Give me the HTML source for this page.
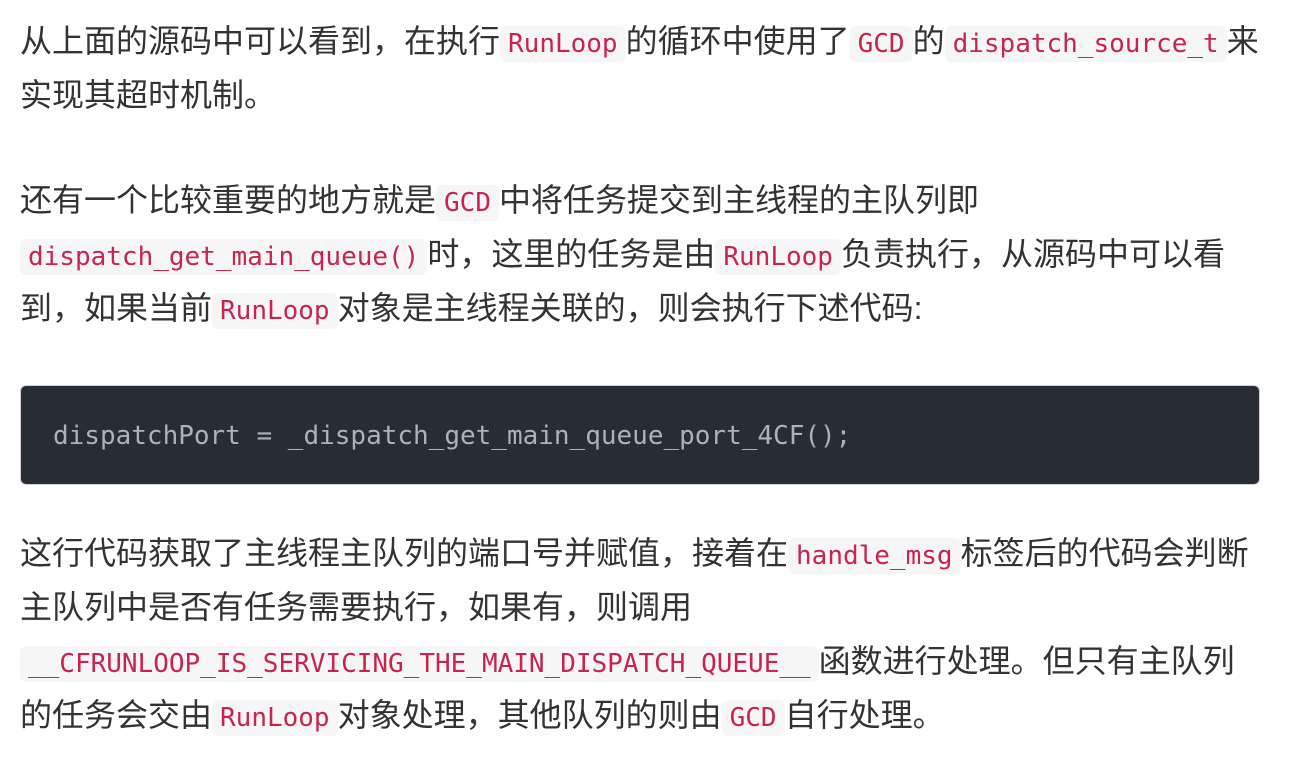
<!DOCTYPE html>
<html><head><meta charset="utf-8"><style>
html,body{margin:0;padding:0;background:#fff;}
body{width:1290px;height:758px;overflow:hidden;font-family:"Liberation Sans","Noto Sans CJK SC",sans-serif;font-size:32px;color:#333;}
.w{position:absolute;left:20px;width:1240px;}
p{margin:0;line-height:54px;white-space:nowrap;}
code{font-family:"DejaVu Sans Mono","Liberation Mono",monospace;font-size:26px;line-height:1;color:#c7254e;background:#f6f6f6;border-radius:6px;padding:3px 8px;}
pre{margin:0;background:#282c34;border:1px solid #cfd2d6;border-radius:6px;box-sizing:border-box;padding:0 32px;font-family:"DejaVu Sans Mono","Liberation Mono",monospace;font-size:26px;color:#abb2bf;}
</style></head><body>
<div class="w" style="top:14px"><p>从上面的源码中可以看到，在执行<code>RunLoop</code>的循环中使用了<code>GCD</code>的<code>dispatch_source_t</code>来<br>实现其超时机制。</p></div>
<div class="w" style="top:173px"><p>还有一个比较重要的地方就是<code>GCD</code>中将任务提交到主线程的主队列即<br><code>dispatch_get_main_queue()</code>时，这里的任务是由<code>RunLoop</code>负责执行，从源码中可以看<br>到，如果当前<code>RunLoop</code>对象是主线程关联的，则会执行下述代码:</p></div>
<div class="w" style="top:385px;height:100px"><pre style="height:100px;line-height:100px">dispatchPort = _dispatch_get_main_queue_port_4CF();</pre></div>
<div class="w" style="top:526px"><p>这行代码获取了主线程主队列的端口号并赋值，接着在<code>handle_msg</code>标签后的代码会判断<br>主队列中是否有任务需要执行，如果有，则调用<br><code>__CFRUNLOOP_IS_SERVICING_THE_MAIN_DISPATCH_QUEUE__</code>函数进行处理。但只有主队列<br>的任务会交由<code>RunLoop</code>对象处理，其他队列的则由<code>GCD</code>自行处理。</p></div>
</body></html>
